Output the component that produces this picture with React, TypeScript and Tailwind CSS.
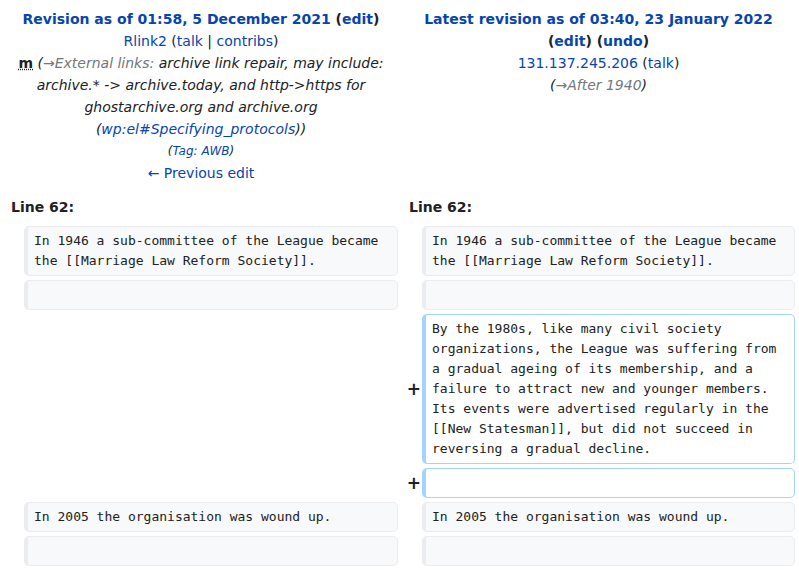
import React from "react";

const link = "text-[#0645ad]";
const sans = "font-['DejaVu_Sans',sans-serif]";
const mono = "font-['DejaVu_Sans_Mono',monospace]";

const Box = ({ added, children }: { added?: boolean; children?: React.ReactNode }) => (
  <div
    className={`${mono} text-[13px] leading-[20px] whitespace-pre-wrap break-words rounded-[5px] border border-l-4 py-1 pl-[6px] pr-[6px] ${
      added ? "border-[#a3d3ff] bg-white" : "border-[#eaecf0] bg-[#f8f9fa]"
    }`}
  >
    {children ?? "\u00a0"}
  </div>
);

const Plus = () => (
  <div className="flex items-center justify-end">
    <span className="-mr-[3px] text-[17px] font-bold leading-none">+</span>
  </div>
);

const App = () => {
  return (
    <div className={`${sans} bg-white text-[#202122]`}>
      <div className="grid grid-cols-[16px_374px_16px_373px] gap-1 p-1">
        {/* Old revision header */}
        <div className="col-span-2 py-1 text-center text-[14px] leading-[22px]">
          <div className="font-bold">
            <span className={link}>Revision as of 01:58, 5 December 2021</span> (
            <span className={link}>edit</span>)
          </div>
          <div>
            <span className={link}>Rlink2</span> (<span className={link}>talk</span> |{" "}
            <span className={link}>contribs</span>)
          </div>
          <div>
            <span className="font-bold underline decoration-dotted">m</span>{" "}
            <span className="italic">
              (<span className="text-[#72777d]">→External links:</span> archive link repair, may include:
              archive.* -&gt; archive.today, and http-&gt;https for ghostarchive.org and archive.org (
              <span className={link}>wp:el#Specifying_protocols</span>))
            </span>
          </div>
          <div className="text-[12px] italic">
            (<span className={link}>Tag: AWB</span>)
          </div>
          <div className={link}>← Previous edit</div>
        </div>

        {/* New revision header */}
        <div className="col-span-2 py-1 text-center text-[14px] leading-[22px]">
          <div className="font-bold">
            <span className={link}>Latest revision as of 03:40, 23 January 2022</span> (
            <span className={link}>edit</span>) (<span className={link}>undo</span>)
          </div>
          <div>
            <span className={link}>131.137.245.206</span> (<span className={link}>talk</span>)
          </div>
          <div className="italic">
            (<span className="text-[#72777d]">→After 1940</span>)
          </div>
        </div>

        {/* Line numbers */}
        <div className="col-span-2 px-[7px] py-1 text-[14px] font-bold leading-[22px]">Line 62:</div>
        <div className="col-span-2 px-[7px] py-1 text-[14px] font-bold leading-[22px]">Line 62:</div>

        {/* Context */}
        <div />
        <Box>In 1946 a sub-committee of the League became the [[Marriage Law Reform Society]].</Box>
        <div />
        <Box>In 1946 a sub-committee of the League became the [[Marriage Law Reform Society]].</Box>

        <div />
        <Box />
        <div />
        <Box />

        {/* Added */}
        <div className="col-span-2" />
        <Plus />
        <Box added>
          By the 1980s, like many civil society organizations, the League was suffering from a gradual
          ageing of its membership, and a failure to attract new and younger members. Its events were
          advertised regularly in the [[New Statesman]], but did not succeed in reversing a gradual decline.
        </Box>

        <div className="col-span-2" />
        <Plus />
        <Box added />

        {/* Context */}
        <div />
        <Box>In 2005 the organisation was wound up.</Box>
        <div />
        <Box>In 2005 the organisation was wound up.</Box>

        <div />
        <Box />
        <div />
        <Box />
      </div>
    </div>
  );
};

export default App;
